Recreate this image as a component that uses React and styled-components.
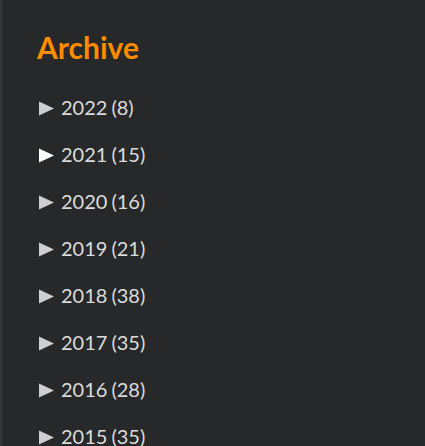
import React from 'react';
import styled, { createGlobalStyle } from 'styled-components';

const GlobalStyle = createGlobalStyle`
  html, body {
    margin: 0;
    padding: 0;
    background: #262829;
  }
  body {
    font-family: Lato, 'Open Sans', sans-serif;
  }
`;

const Sidebar = styled.aside`
  min-height: 446px;
  box-sizing: border-box;
  border-left: 2px solid #35383a;
  background: #262829;
  padding: 30px 0 0 35px;
`;

const Title = styled.h2`
  margin: 0 0 31px;
  font-size: 30px;
  font-weight: 700;
  line-height: 34px;
  color: #ff8c00;
`;

const List = styled.ul`
  list-style: none;
  margin: 0;
  padding: 0;
  display: flex;
  flex-direction: column;
  gap: 23px;
`;

const Item = styled.li`
  display: flex;
  align-items: center;
  gap: 7px;
  height: 24px;
  padding-left: 2px;
  font-size: 20px;
  color: #dcdcdc;
  cursor: pointer;
`;

const Arrow = styled.svg`
  width: 15px;
  height: 15px;
  margin-top: 2px;
  flex-shrink: 0;
  fill: ${(p) => (p.$active ? '#ffffff' : '#cfcfcf')};
`;

const Count = styled.span`
  margin-left: 4px;
`;

const years = [
  { year: 2022, count: 8 },
  { year: 2021, count: 15, active: true },
  { year: 2020, count: 16 },
  { year: 2019, count: 21 },
  { year: 2018, count: 38 },
  { year: 2017, count: 35 },
  { year: 2016, count: 28 },
  { year: 2015, count: 35 },
];

export default function App() {
  return (
    <>
      <GlobalStyle />
      <Sidebar>
        <Title>Archive</Title>
        <List>
          {years.map((y) => (
            <Item key={y.year}>
              <Arrow viewBox="0 0 15 15" $active={y.active}>
                <polygon points="0,0.5 15,7.5 0,14.5" />
              </Arrow>
              <span>
                {y.year}
                <Count>({y.count})</Count>
              </span>
            </Item>
          ))}
        </List>
      </Sidebar>
    </>
  );
}
